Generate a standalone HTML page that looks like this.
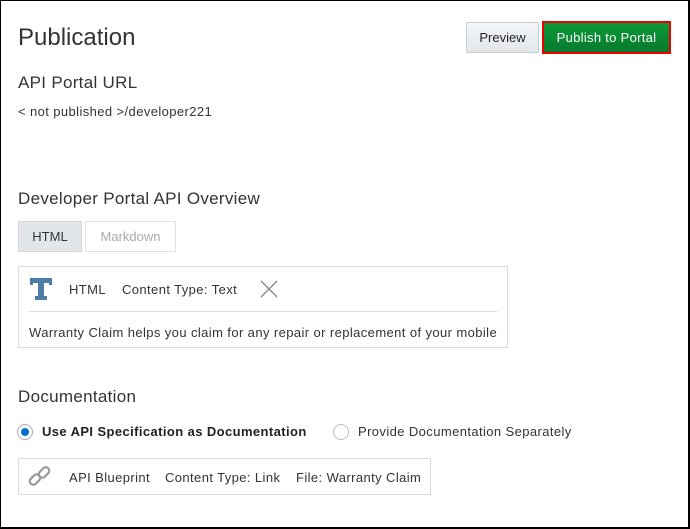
<!DOCTYPE html><html><head><style>
*{box-sizing:border-box}
body{margin:0;width:690px;height:529px;overflow:hidden;font-family:"Liberation Sans",sans-serif;color:#333;background:#fff}
.frame{position:absolute;left:0;top:0;width:690px;height:529px;border:1px solid #000;border-right-width:2px;border-bottom-width:2px}
.a{position:absolute;white-space:nowrap}
.t{font-size:13px;letter-spacing:0.4px}
.h{font-size:17px;letter-spacing:0.3px}
</style></head><body><div class="frame"></div>
<div class="a" style="left:18px;top:24px;font-size:24px;color:#333">Publication</div>
<div class="a" style="left:466px;top:22px;width:73px;height:31px;border:1px solid #c4ccd4;border-radius:2px;background:linear-gradient(#f4f6f8,#e3e7ea);font-size:13px;text-align:center;line-height:29px;color:#222">Preview</div>
<div class="a" style="left:542px;top:21px;width:129px;height:33px;border:2px solid #e00;background:linear-gradient(#0a9a3a,#087a2c);font-size:13px;color:#fff;text-align:center;line-height:29px;letter-spacing:0.3px">Publish to Portal</div>
<div class="a h" style="left:18px;top:73px">API Portal URL</div>
<div class="a t" style="left:18px;top:104px">&lt; not published &gt;/developer221</div>
<div class="a h" style="left:18px;top:189px">Developer Portal API Overview</div>
<div class="a" style="left:18px;top:221px;width:64px;height:31px;background:#e3e6e9;border:1px solid #d4d8dc;font-size:13px;text-align:center;line-height:29px">HTML</div>
<div class="a" style="left:85px;top:221px;width:91px;height:31px;background:#fff;border:1px solid #dfe2e5;font-size:13px;text-align:center;line-height:29px;color:#aaa">Markdown</div>
<div class="a" style="left:18px;top:266px;width:490px;height:82px;border:1px solid #d6dce2"></div>
<svg class="a" style="left:29px;top:277px" width="24" height="24"><path d="M1 1H23V8H20V6H15V19H18V23H6V19H9V6H4V8H1Z" fill="#4f7ca8"/></svg>
<div class="a t" style="left:69px;top:282px">HTML</div>
<div class="a t" style="left:122px;top:282px">Content Type: Text</div>
<svg class="a" style="left:260px;top:280px" width="18" height="18"><path d="M1 1L17 17M17 1L1 17" stroke="#888" stroke-width="1.3"/></svg>
<div class="a" style="left:29px;top:311px;width:468px;height:1px;background:#d6dce2"></div>
<div class="a t" style="left:29px;top:325px">Warranty Claim helps you claim for any repair or replacement of your mobile</div>
<div class="a h" style="left:18px;top:387px">Documentation</div>
<div class="a" style="left:17px;top:424px;width:16px;height:16px;border:1px solid #aab;border-radius:50%"><div style="position:absolute;left:3px;top:3px;width:8px;height:8px;border-radius:50%;background:#0572ce"></div></div>
<div class="a t" style="left:42px;top:424px;font-weight:bold;color:#222">Use API Specification as Documentation</div>
<div class="a" style="left:333px;top:424px;width:16px;height:16px;border:1px solid #bbb;border-radius:50%"></div>
<div class="a t" style="left:358px;top:424px">Provide Documentation Separately</div>
<div class="a" style="left:18px;top:458px;width:413px;height:37px;border:1px solid #d6dce2"></div>
<svg class="a" style="left:27px;top:465px" width="26" height="24"><g fill="none" stroke="#999" stroke-width="2.2"><rect x="2" y="11" width="12" height="7" rx="3.5" transform="rotate(-45 8 14.5)"/><rect x="11" y="4" width="12" height="7" rx="3.5" transform="rotate(-45 17 7.5)"/></g></svg>
<div class="a t" style="left:69px;top:470px">API Blueprint</div>
<div class="a t" style="left:165px;top:470px">Content Type: Link</div>
<div class="a t" style="left:296px;top:470px">File: Warranty Claim</div>
</body></html>
